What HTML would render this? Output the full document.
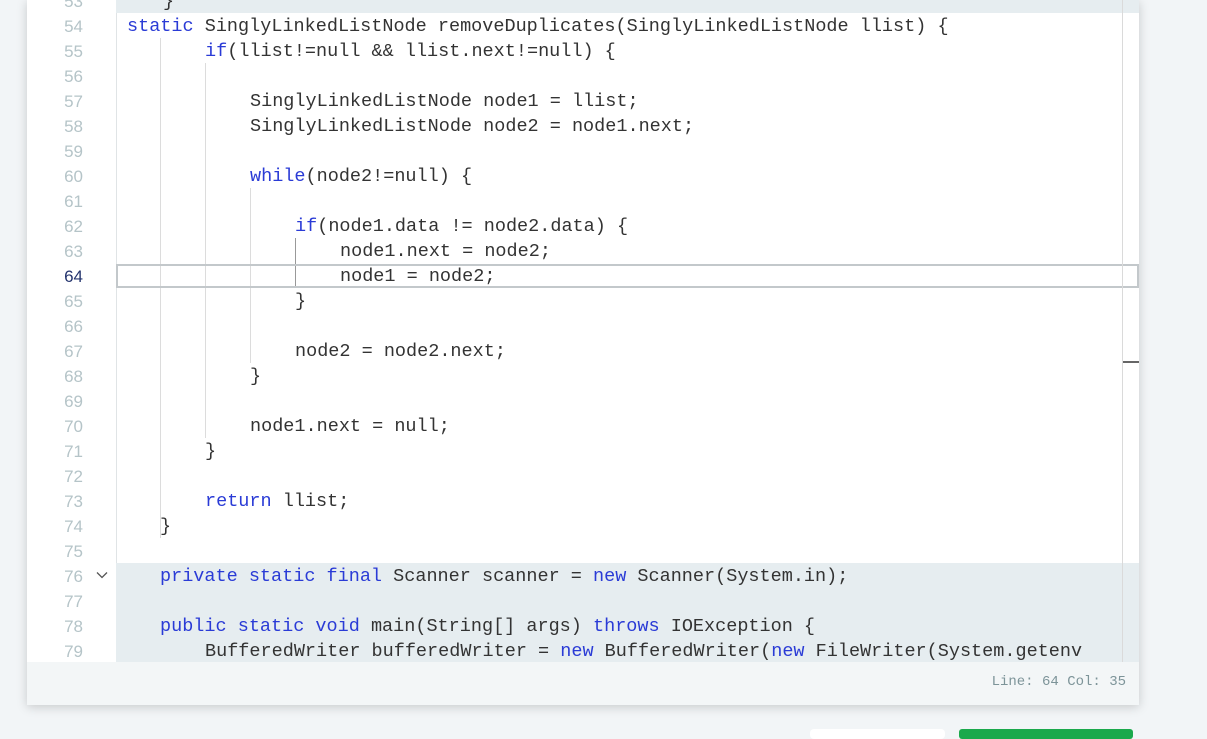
<!DOCTYPE html>
<html><head><meta charset="utf-8"><style>
*{margin:0;padding:0;box-sizing:border-box}
html,body{width:1207px;height:732px;overflow:hidden;background:#f2f5f7;font-family:"Liberation Mono",monospace}
#panel{position:absolute;left:27px;top:0;width:1112px;height:705px;background:#fff;box-shadow:0 2px 10px rgba(0,0,0,0.18);overflow:hidden}
.hl{position:absolute;left:89px;right:0;background:#e6edf0}
.ln{position:absolute;left:0;width:56px;text-align:right;color:#b5c4c8;font-size:17px;font-family:"Liberation Sans",sans-serif;line-height:25px}
.c{position:absolute;white-space:pre;font-size:18.5px;line-height:25px;color:#333}
.k{color:#2a3bd6}
.g{position:absolute;width:1px;background:#dcdcdc}
#status{position:absolute;left:0;top:662px;width:100%;height:43px;background:#f3f6f7;color:#7d9499;font-size:14px;text-align:right;padding:12px 13px 0 0}
</style></head><body>
<div id="panel">
<div class="hl" style="top:0;height:13px"></div>
<div class="hl" style="top:563px;height:99px"></div>
<div style="position:absolute;left:89px;top:13px;width:1px;height:550px;background:#e0e4e6"></div>
<div class="g" style="left:133px;top:38px;height:500px"></div>
<div class="g" style="left:178px;top:63px;height:375px"></div>
<div class="g" style="left:223px;top:188px;height:175px"></div>
<div class="g" style="left:268px;top:238px;height:50px;background:#999"></div>
<div style="position:absolute;left:89px;top:264px;width:1023px;height:24px;border:2px solid #c3c8cb"></div>
<div style="position:absolute;left:1095px;top:0;width:1px;height:662px;background:#dadada"></div>
<div style="position:absolute;left:1096px;top:361px;width:16px;height:2px;background:#666"></div>
<div id="lines"></div>
<svg style="position:absolute;left:69px;top:571px" width="12" height="8" viewBox="0 0 12 8"><path d="M1 1.5 L6 6.5 L11 1.5" fill="none" stroke="#555" stroke-width="1.3"/></svg>
<div id="status">Line: 64 Col: 35</div>
</div>
<div style="position:absolute;left:810px;top:729px;width:135px;height:10px;background:#fff;border-radius:4px"></div>
<div style="position:absolute;left:959px;top:729px;width:174px;height:10px;background:#1ba94c;border-radius:3px"></div>
<script>
var L=[
[53,136,'}'],
[54,100,'<span class="k">static</span> SinglyLinkedListNode removeDuplicates(SinglyLinkedListNode llist) {'],
[55,178,'<span class="k">if</span>(llist!=null &amp;&amp; llist.next!=null) {'],
[56,0,''],
[57,223,'SinglyLinkedListNode node1 = llist;'],
[58,223,'SinglyLinkedListNode node2 = node1.next;'],
[59,0,''],
[60,223,'<span class="k">while</span>(node2!=null) {'],
[61,0,''],
[62,268,'<span class="k">if</span>(node1.data != node2.data) {'],
[63,313,'node1.next = node2;'],
[64,313,'node1 = node2;'],
[65,268,'}'],
[66,0,''],
[67,268,'node2 = node2.next;'],
[68,223,'}'],
[69,0,''],
[70,223,'node1.next = null;'],
[71,178,'}'],
[72,0,''],
[73,178,'<span class="k">return</span> llist;'],
[74,133,'}'],
[75,0,''],
[76,133,'<span class="k">private static final</span> Scanner scanner = <span class="k">new</span> Scanner(System.in);'],
[77,0,''],
[78,133,'<span class="k">public static void</span> main(String[] args) <span class="k">throws</span> IOException {'],
[79,178,'BufferedWriter bufferedWriter = <span class="k">new</span> BufferedWriter(<span class="k">new</span> FileWriter(System.getenv']
];
var h='';
L.forEach(function(a){var t=(a[0]-53)*25-11;
h+='<div class="ln" style="top:'+t+'px;'+(a[0]==64?'color:#24346e':'')+'">'+a[0]+'</div>';
if(a[2])h+='<div class="c" style="left:'+a[1]+'px;top:'+t+'px">'+a[2]+'</div>';});
document.getElementById('lines').innerHTML=h;
</script>
</body></html>
